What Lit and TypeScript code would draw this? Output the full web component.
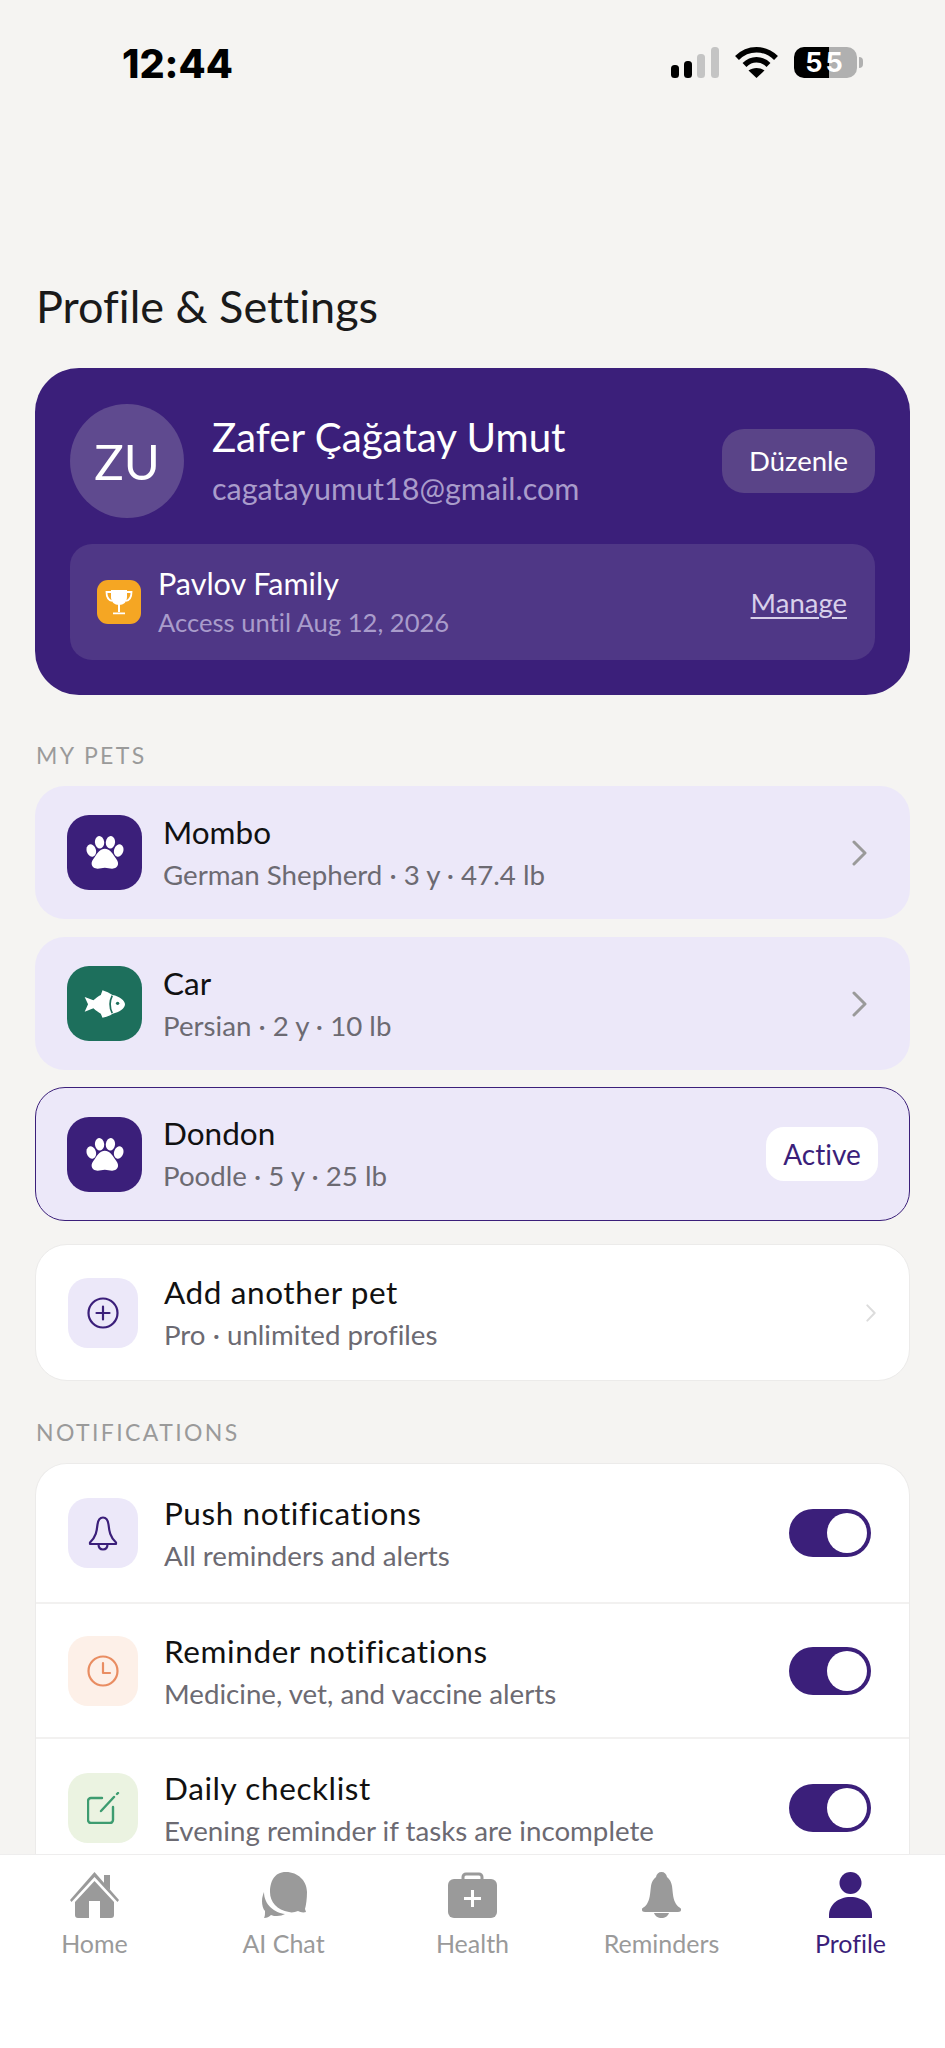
import { LitElement, html, css } from "lit";
import { customElement } from "lit/decorators.js";

const paw = html`<svg class="glyph" width="38" height="33" viewBox="105 108 115 100" fill="#fff"><ellipse cx="121" cy="152" rx="14" ry="19" transform="rotate(-18 121 152)"/><ellipse cx="146" cy="127" rx="14" ry="19" transform="rotate(-6 146 127)"/><ellipse cx="179" cy="127" rx="14" ry="19" transform="rotate(6 179 127)"/><ellipse cx="204" cy="152" rx="14" ry="19" transform="rotate(18 204 152)"/><path d="M162 147c-14 0-22 12-30 24-6 8-11 14-10 22 1 9 9 14 18 14 8 0 14-3 22-3s14 3 22 3c9 0 17-5 18-14 1-8-4-14-10-22-8-12-16-24-30-24z"/></svg>`;
const fish = html`<svg class="glyph" width="41" height="28" viewBox="100 568 122 82"><path fill="#fff" d="M102 588l26 10c8-7 14-12 22-16l5-14c10 3 22 9 30 14 20 4 37 16 37 28s-17 24-37 28c-8 6-20 10-30 12l-5-12c-8-4-14-9-22-16l-26 10 10-22z"/><path d="M184 584c-8 16-8 36 0 52" fill="none" stroke="#1d6f5c" stroke-width="5"/><circle cx="200" cy="607" r="5" fill="#1d6f5c"/></svg>`;
const trophy = html`<svg width="28" height="26" viewBox="0 0 28 26"><path d="M6 1h16v7c0 5-3.500 8-8 8s-8-3-8-8z" fill="#fff"/><path d="M6 3H1.500c0 5 1.500 8 5.500 9M22 3h4.500c0 5-1.500 8-5.500 9" fill="none" stroke="#fff" stroke-width="1.800"/><path d="M13 15h2v8h-2zM8 23.500h12v1.800H8z" fill="#fff"/></svg>`;
const chev = (c: string, w: number, h: number) => html`<svg width=${w} height=${h} viewBox="0 0 15 26" preserveAspectRatio="none" fill="none" stroke=${c} stroke-width="3" stroke-linecap="round" stroke-linejoin="round"><path d="M2 2l11 11L2 24"/></svg>`;
const S = "#3b1f7a";
const plus = html`<svg width="32" height="32" viewBox="0 0 32 32" fill="none" stroke=${S} stroke-width="2.200" stroke-linecap="round"><circle cx="16" cy="16" r="14.500"/><path d="M16 9.500v13M9.500 16h13"/></svg>`;
const bellO = html`<svg width="30" height="35" viewBox="0 0 30 35" fill="none" stroke=${S} stroke-width="2.200" stroke-linejoin="round"><path d="M15 1.500c-3 0-5 3-5.500 7C8.800 15 8 21 2 26.500v1.500h26v-1.500C22 21 21.200 15 20.500 8.500 20 4.500 18 1.500 15 1.500z"/><path d="M10.500 28c0 3.500 2 5.500 4.500 5.500s4.500-2 4.500-5.500"/></svg>`;
const clock = html`<svg width="32" height="32" viewBox="0 0 32 32" fill="none" stroke="#e98d62" stroke-width="2.200" stroke-linecap="round" stroke-linejoin="round"><circle cx="16" cy="16" r="14.500"/><path d="M16 8v10h7"/></svg>`;
const edit = html`<svg width="33" height="32" viewBox="0 0 33 32" fill="none" stroke="#3d9c70" stroke-width="2.400" stroke-linecap="round" stroke-linejoin="round"><path d="M15 6H4a3 3 0 0 0-3 3v19a3 3 0 0 0 3 3h19a3 3 0 0 0 3-3V15"/><path d="M14 19L27 5M30 2l1-1"/></svg>`;

const navHome = html`<svg width="49" height="46" viewBox="0 0 49 46" fill="#9a9a9a"><path d="M34 3h6v15l-6-6z"/><path d="M24.500 0L49 28l-1.500 2L24.500 5 1.500 30 0 28z"/><path d="M24.500 9L5 30v13a3 3 0 0 0 3 3h11V29h11v17h11a3 3 0 0 0 3-3V30z"/></svg>`;
const navChat = html`<svg width="47" height="46" viewBox="0 0 47 46" fill="#9a9a9a"><path d="M26 0c12 0 21 9 21 20 0 7-1 13-2 17l1 3c-3 1-6 0-8-1-3 1-6 2-9 1-12-2-19-10-19-20S14 0 26 0z"/><path d="M4 20c-1 3-2 5-2 9 0 4 1 8 3 10 0 3 0 5-1 7 3 0 5-1 7-3 2 1 4 1 6 1 3 0 6-1 8-2-10-1-21-9-21-22z"/></svg>`;
const navHealth = html`<svg width="49" height="46" viewBox="0 0 49 46"><path d="M15 8V5a3 3 0 0 1 3-3h13a3 3 0 0 1 3 3v3" fill="none" stroke="#9a9a9a" stroke-width="3"/><rect y="7" width="49" height="39" rx="6" fill="#9a9a9a"/><path d="M24.500 18v17M16 26.500h17" stroke="#fff" stroke-width="3"/></svg>`;
const navBell = html`<svg width="39" height="46" viewBox="0 0 39 46" fill="#9a9a9a"><path d="M19.500 0c-3 0-5 2-5.500 5-1 1-4 3-5 9-1 8-1 13-4 18-2 3-5 4-5 5v1c0 1 1 2 3 2h33c2 0 3-1 3-2v-1c0-1-3-2-5-5-3-5-3-10-4-18-1-6-4-8-5-9-.5-3-2.500-5-5.500-5z"/><path d="M12 41h15c-1 3-4 5-7.500 5S13 44 12 41z"/></svg>`;
const navPerson = html`<svg width="43" height="46" viewBox="0 0 43 46" fill=${S}><ellipse cx="21.500" cy="11" rx="11" ry="11"/><path d="M21.500 25C9 25 0 33 0 43v3h43v-3c0-10-9-18-21.500-18z"/></svg>`;

const signal = html`<svg width="48" height="31" viewBox="0 0 48 31"><rect x="0" y="18" width="8" height="13" rx="3.500" fill="#000"/><rect x="13" y="14" width="8" height="17" rx="3.500" fill="#000"/><rect x="26" y="7" width="8" height="24" rx="3.500" fill="#c4c4c4"/><rect x="40" y="0" width="8" height="31" rx="3.500" fill="#c4c4c4"/></svg>`;
const wifi = html`<svg width="43" height="31" viewBox="0 0 43 31" fill="none" stroke="#000" stroke-width="5.500"><path d="M2 11C13 0 30 0 41 11"/><path d="M9.500 18c7-7 17-7 24 0"/><path d="M21.500 31l-8-7.500c4.500-3.500 11.500-3.500 16 0z" fill="#000" stroke="none"/></svg>`;

interface Row { icon: unknown; title: string; sub: string; bg: string; }

@customElement("app-root")
export class AppRoot extends LitElement {
  static styles = css`
    :host { display: block; width: 945px; height: 2048px; overflow: hidden; background: #f5f4f2; font-family: "Lato", "Noto Sans", sans-serif; color: #111; font-variant-ligatures: none; }
    * { box-sizing: border-box; }
    .page { height: 2048px; display: flex; flex-direction: column; }
    .status { height: 100px; flex: none; display: flex; align-items: flex-start; padding: 47px 88px 0 122px; justify-content: space-between; }
    .time { font-family: "Inter", "Liberation Sans", sans-serif; font-weight: 800; font-size: 39.500px; line-height: 34px; color: #000; }
    .sys { display: flex; align-items: center; gap: 16px; }
    .batt { width: 63px; height: 31px; border-radius: 10px; background: linear-gradient(90deg, #000 0 55%, #b0b0b0 55%); color: #fff; font: 700 27px/31px "Inter", "Liberation Sans", sans-serif; text-align: center; letter-spacing: 3px; position: relative; }
    .batt::after { content: ""; position: absolute; left: 65px; top: 10px; width: 4px; height: 11px; border-radius: 0 4px 4px 0; background: #b0b0b0; }
    .scroll { flex: 1; min-height: 0; overflow: hidden; padding: 180px 35px 0 35px; }
    h1 { margin: 0 0 36px 1px; font-size: 45px; font-weight: 400; line-height: 52px; color: #1a1a1a; }
    .hero { background: #3b1f7a; border-radius: 44px; padding: 35px; height: 327px; }
    .hero-top { display: flex; align-items: center; height: 115px; }
    .avatar { width: 114px; height: 114px; border-radius: 50%; background: #5f4a8f; color: #fff; font-size: 49px; display: flex; align-items: center; justify-content: center; flex: none; margin-right: 28px; }
    .who { flex: 1; min-width: 0; }
    .name { color: #fff; font-size: 40.300px; line-height: 48px; }
    .email { color: #a99ccb; font-size: 30.500px; line-height: 40px; margin-top: 7px; }
    .edit { width: 153px; height: 64px; border-radius: 22px; background: #5a4488; color: #fff; font-size: 27.500px; display: flex; align-items: center; justify-content: center; }
    .plan { margin-top: 26px; height: 116px; border-radius: 22px; background: #4f3786; display: flex; align-items: center; padding: 0 28px 0 27px; }
    .trophy { width: 44px; height: 44px; border-radius: 11px; background: #f5a623; display: flex; align-items: center; justify-content: center; margin-right: 17px; flex: none; }
    .plan-text { flex: 1; }
    .plan-name { color: #fff; font-size: 30.500px; line-height: 38px; }
    .plan-sub { color: #a99ccb; font-size: 25.600px; line-height: 36px; margin-top: 2px; }
    .manage { color: #d8d0ea; font-size: 27.500px; text-decoration: underline; text-underline-offset: 4px; text-decoration-thickness: 1.500px; }
    .label { color: #9a9a9a; font-size: 23px; line-height: 30px; letter-spacing: 2.400px; margin: 45px 0 16px 1px; }
    .pets { display: flex; flex-direction: column; gap: 18px; }
    .pet { height: 133px; border-radius: 30px; background: #ece8f9; display: flex; align-items: center; padding: 0 43px 0 32px; }
    .pet.active { height: 134px; border: 1px solid #3b1f7a; padding: 0 31px 0 31px; margin-top: -1px; }
    .pet-icon { width: 75px; height: 75px; border-radius: 22px; display: flex; align-items: center; justify-content: center; margin-right: 21px; flex: none; background: #3b1f7a; }
    .pet-icon.green { background: #1d6f5c; }
    .grow { flex: 1; min-width: 0; padding-top: 3px; }
    .pet .grow, .add .grow { padding-top: 1px; }
    .t { font-size: 31.500px; line-height: 40px; color: #111; }
    .add .t, .row .t { letter-spacing: .6px; }
    .s { font-size: 27.700px; line-height: 40px; color: #6c6a72; margin-top: 3px; }
    .badge { width: 112px; height: 54px; border-radius: 18px; background: #fff; color: #3b1f7a; font-size: 28px; display: flex; align-items: center; justify-content: center; }
    .add { margin-top: 23px; height: 137px; border-radius: 32px; background: #fff; border: 1px solid #ecebea; display: flex; align-items: center; padding: 0 33px 0 32px; }
    .sq { width: 70px; height: 70px; border-radius: 20px; display: flex; align-items: center; justify-content: center; margin-right: 26px; flex: none; }
    .notif-label { margin-top: 36px; margin-bottom: 16px; }
    .list { background: #fff; border: 1px solid #ecebea; border-bottom: none; border-radius: 32px 32px 0 0; }
    .row { display: flex; align-items: center; padding: 0 38px 0 32px; height: 135px; border-top: 2px solid #f2f1f0; }
    .row:first-child { height: 138px; border-top: none; }
    .row:last-child { height: 140px; }
    .toggle { width: 82px; height: 48px; border-radius: 24px; background: #3b1f7a; display: flex; align-items: center; justify-content: flex-end; padding: 4px; flex: none; }
    .knob { width: 40px; height: 40px; border-radius: 50%; background: #fff; }
    .nav { height: 194px; flex: none; background: #fff; border-top: 1px solid #eeeded; display: grid; grid-template-columns: repeat(5, 189px); padding-top: 17px; }
    .tab { display: flex; flex-direction: column; align-items: center; color: #9a9a9a; font-size: 25px; line-height: 30px; }
    .tab.on { color: #3b1f7a; }
    .tab .ic { height: 46px; margin-bottom: 10px; display: flex; }
    .glyph { display: block; }
  `;

  pet(icon: unknown, green: boolean, name: string, sub: string) {
    return html`<div class="pet">
      <div class="pet-icon ${green ? "green" : ""}">${icon}</div>
      <div class="grow"><div class="t">${name}</div><div class="s">${sub}</div></div>
      ${chev("#9a9a9a", 15, 26)}
    </div>`;
  }

  render() {
    const rows: Row[] = [
      { icon: bellO, title: "Push notifications", sub: "All reminders and alerts", bg: "#ece8f9" },
      { icon: clock, title: "Reminder notifications", sub: "Medicine, vet, and vaccine alerts", bg: "#fdf0e8" },
      { icon: edit, title: "Daily checklist", sub: "Evening reminder if tasks are incomplete", bg: "#ebf3e1" },
    ];
    const tabs: [unknown, string, boolean][] = [
      [navHome, "Home", false], [navChat, "AI Chat", false], [navHealth, "Health", false], [navBell, "Reminders", false], [navPerson, "Profile", true],
    ];
    return html`<div class="page">
      <div class="status">
        <div class="time">12:44</div>
        <div class="sys">${signal}${wifi}<div class="batt">55</div></div>
      </div>
      <div class="scroll">
        <h1>Profile &amp; Settings</h1>
        <div class="hero">
          <div class="hero-top">
            <div class="avatar">ZU</div>
            <div class="who"><div class="name">Zafer Çağatay Umut</div><div class="email">cagatayumut18@gmail.com</div></div>
            <div class="edit">Düzenle</div>
          </div>
          <div class="plan">
            <div class="trophy">${trophy}</div>
            <div class="plan-text"><div class="plan-name">Pavlov Family</div><div class="plan-sub">Access until Aug 12, 2026</div></div>
            <div class="manage">Manage</div>
          </div>
        </div>
        <div class="label">MY PETS</div>
        <div class="pets">
          ${this.pet(paw, false, "Mombo", "German Shepherd · 3 y · 47.4 lb")}
          ${this.pet(fish, true, "Car", "Persian · 2 y · 10 lb")}
          <div class="pet active">
            <div class="pet-icon">${paw}</div>
            <div class="grow"><div class="t">Dondon</div><div class="s">Poodle · 5 y · 25 lb</div></div>
            <div class="badge">Active</div>
          </div>
        </div>
        <div class="add">
          <div class="sq" style="background:#ece8f9">${plus}</div>
          <div class="grow"><div class="t">Add another pet</div><div class="s">Pro · unlimited profiles</div></div>
          ${chev("#dcdcdc", 10, 18)}
        </div>
        <div class="label notif-label">NOTIFICATIONS</div>
        <div class="list">
          ${rows.map(r => html`<div class="row">
            <div class="sq" style="background:${r.bg}">${r.icon}</div>
            <div class="grow"><div class="t">${r.title}</div><div class="s">${r.sub}</div></div>
            <div class="toggle"><div class="knob"></div></div>
          </div>`)}
        </div>
      </div>
      <div class="nav">
        ${tabs.map(([i, l, on]) => html`<div class="tab ${on ? "on" : ""}"><div class="ic">${i}</div>${l}</div>`)}
      </div>
    </div>`;
  }
}
